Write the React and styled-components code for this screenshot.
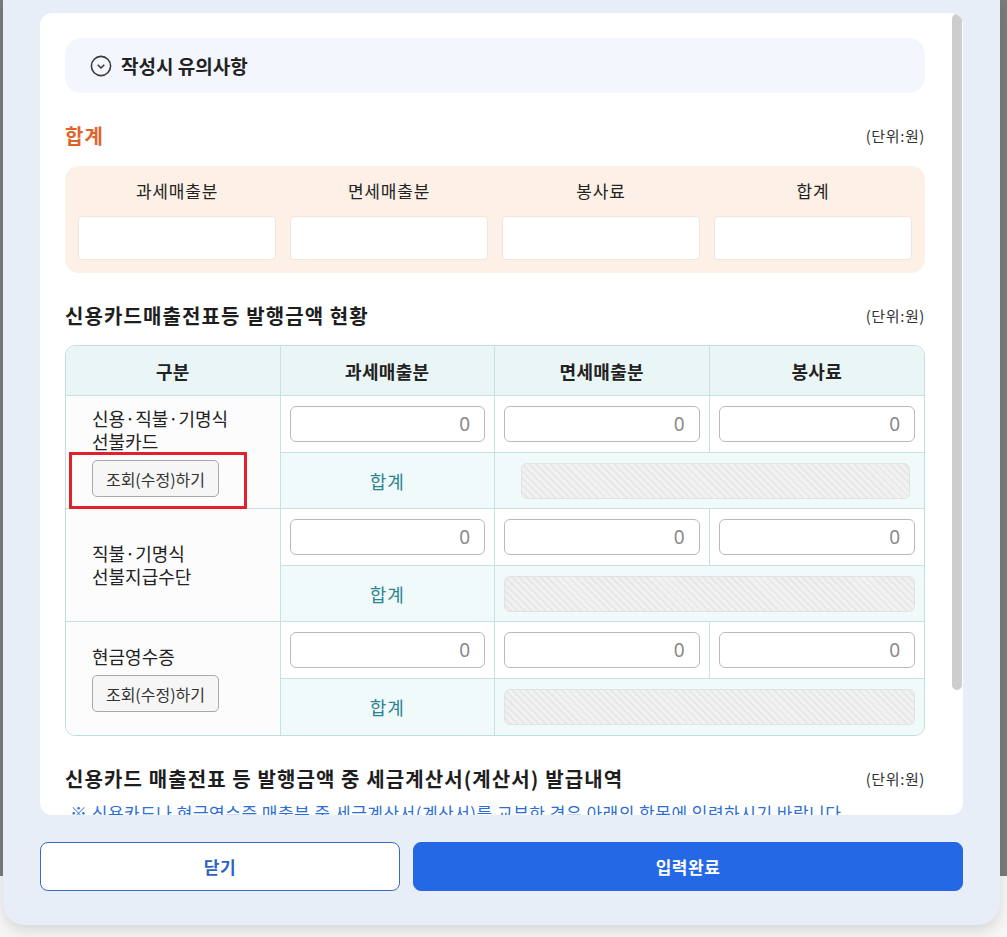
import React from "react";
import styled, { createGlobalStyle } from "styled-components";

const GlobalStyle = createGlobalStyle`
  html, body {
    margin: 0;
    padding: 0;
  }
  body {
    font-family: "Noto Sans CJK KR", "Noto Sans", sans-serif;
    color: #222;
  }
  * {
    box-sizing: border-box;
  }
`;

const Page = styled.div`
  width: 1007px;
  height: 937px;
  overflow: hidden;
  background: linear-gradient(
    to bottom,
    #7b7b7b 0,
    #7b7b7b 876px,
    #f6f6f6 876px
  );
`;

const Modal = styled.div`
  margin-left: 3px;
  width: 997px;
  height: 925px;
  background: #e8eef8;
  border-radius: 0 0 22px 22px;
  box-shadow: 0 6px 14px rgba(0, 0, 0, 0.12);
  padding: 13px 37px 0;
  display: flex;
  flex-direction: column;
`;

const Panel = styled.div`
  height: 802px;
  background: #fff;
  border-radius: 12px;
  overflow: hidden;
  display: flex;
`;

const Content = styled.div`
  flex: 1;
  min-width: 0;
  overflow: hidden;
  padding: 25px 26px 0 25px;
`;

const ScrollTrack = styled.div`
  width: 12px;
  padding: 1px 1px 0 1px;
`;

const ScrollThumb = styled.div`
  height: 676px;
  background: #cdcdcd;
  border-radius: 5px;
`;

const Notice = styled.div`
  height: 55px;
  background: #f3f7fd;
  border-radius: 16px;
  display: flex;
  align-items: center;
  gap: 9px;
  padding-left: 25px;
  font-size: 19px;
  font-weight: 700;
  color: #222;
`;

const SectionHead = styled.div`
  display: flex;
  align-items: center;
  justify-content: space-between;
  height: 30px;
  margin-top: 27px;
  margin-bottom: ${(props) => props.$gap}px;
`;

const SectionTitle = styled.h2`
  margin: 0;
  font-size: 20px;
  font-weight: 700;
  color: ${(props) => (props.$accent ? "#e0632b" : "#1e1e1e")};
  letter-spacing: ${(props) => (props.$accent ? 1 : 1.1)}px;
  white-space: nowrap;
`;

const Unit = styled.span`
  font-size: 15px;
  letter-spacing: 0.6px;
  color: #333;
`;

const SumBox = styled.div`
  background: #fdf1e7;
  border-radius: 14px;
  padding: 13px;
  display: grid;
  grid-template-columns: repeat(4, 1fr);
  column-gap: 14px;
`;

const SumCol = styled.div`
  display: flex;
  flex-direction: column;
  gap: 13px;
`;

const SumLabel = styled.div`
  height: 24px;
  line-height: 24px;
  text-align: center;
  font-size: 17px;
  letter-spacing: 0.8px;
  color: #222;
`;

const SumInput = styled.input`
  height: 44px;
  width: 100%;
  border: 1px solid #f1e5db;
  border-radius: 4px;
  background: #fff;
  outline: none;
`;

const Table = styled.div`
  display: grid;
  grid-template-columns: repeat(4, 1fr);
  grid-template-rows: 50px repeat(3, 57px 56px);
  border: 1px solid #bfdfe0;
  border-radius: 10px;
  overflow: hidden;
`;

const Head = styled.div`
  background: #eaf6f6;
  display: flex;
  align-items: center;
  justify-content: center;
  font-size: 18px;
  letter-spacing: 0.3px;
  font-weight: 700;
  color: #222;
  border-bottom: 1px solid #c6e2e3;
  border-right: ${(props) => (props.$last ? "none" : "1px solid #c6e2e3")};
`;

const KindCell = styled.div`
  grid-row: span 2;
  position: relative;
  background: #fcfcfc;
  border-right: 1px solid #c6e2e3;
  border-bottom: ${(props) => (props.$last ? "none" : "1px solid #c6e2e3")};
  display: flex;
  flex-direction: column;
  justify-content: center;
  align-items: flex-start;
  padding-left: 26px;
  gap: 7px;
`;

const KindName = styled.div`
  font-size: 18px;
  line-height: 23px;
  color: #222;
`;

const LookupButton = styled.button`
  width: 127px;
  height: 37px;
  border: 1px solid #a9a9a9;
  border-radius: 5px;
  background: #f6f6f6;
  font-family: inherit;
  font-size: 16px;
  color: #333;
  padding: 0;
  cursor: pointer;
`;

const Highlight = styled.div`
  position: absolute;
  left: 3px;
  top: 56px;
  width: 178px;
  height: 57px;
  border: 3px solid #e0202a;
  pointer-events: none;
`;

const InputCell = styled.div`
  background: #fff;
  padding: 10px 9px 0;
  border-bottom: 1px solid #c6e2e3;
  border-right: ${(props) => (props.$last ? "none" : "1px solid #c6e2e3")};
`;

const AmountInput = styled.input`
  width: 100%;
  height: 36px;
  border: 1px solid #bababa;
  border-radius: 6px;
  background: #fff;
  text-align: right;
  padding: 0 14px 0 8px;
  font-family: "Noto Sans", "Liberation Sans", sans-serif;
  font-size: 19px;
  color: #8a8a8a;
  outline: none;
`;

const TotalLabel = styled.div`
  background: #f1fafa;
  display: flex;
  align-items: center;
  justify-content: center;
  font-size: 18px;
  letter-spacing: 1px;
  color: #2b8590;
  border-right: 1px solid #c6e2e3;
  border-bottom: ${(props) => (props.$last ? "none" : "1px solid #c6e2e3")};
`;

const TotalCell = styled.div`
  grid-column: span 2;
  background: #f1fafa;
  padding: 10px ${(props) => props.$right}px 0 ${(props) => props.$left}px;
  border-bottom: ${(props) => (props.$last ? "none" : "1px solid #c6e2e3")};
`;

const Hatched = styled.div`
  height: 36px;
  border: 1px solid #e2e2e2;
  border-radius: 6px;
  background: repeating-linear-gradient(
    45deg,
    #f1f1f1 0,
    #f1f1f1 3px,
    #e7e7e7 3px,
    #e7e7e7 5px
  );
`;

const Note = styled.p`
  margin: 9px 0 0 5px;
  font-size: 17px;
  letter-spacing: 0.5px;
  line-height: 22px;
  color: #2d6fd8;
  white-space: nowrap;
`;

const Footer = styled.div`
  display: grid;
  grid-template-columns: 360px 1fr;
  gap: 13px;
  margin-top: 27px;
`;

const FooterButton = styled.button`
  height: 49px;
  border-radius: 8px;
  font-family: inherit;
  font-size: 17px;
  letter-spacing: 0.5px;
  font-weight: 700;
  cursor: pointer;
  border: 1px solid ${(props) => (props.$primary ? "#2568e5" : "#3a6ac4")};
  background: ${(props) => (props.$primary ? "#2568e5" : "#fff")};
  color: ${(props) => (props.$primary ? "#fff" : "#2d62c0")};
`;

const ChevronCircle = () => (
  <svg width="22" height="22" viewBox="0 0 22 22" fill="none">
    <circle cx="11" cy="11" r="9.6" stroke="#3a3a3a" strokeWidth="1.6" />
    <path
      d="M8.2 10.2 L11 13 L13.8 10.2"
      stroke="#3a3a3a"
      strokeWidth="1.6"
      strokeLinecap="round"
      strokeLinejoin="round"
    />
  </svg>
);

const rows = [
  {
    name: ["신용·직불·기명식", "선불카드"],
    button: true,
    highlight: true,
    left: 26,
    right: 14,
  },
  { name: ["직불·기명식", "선불지급수단"], button: false, left: 9, right: 9 },
  { name: ["현금영수증"], button: true, left: 9, right: 9 },
];

const App = () => {
  return (
    <Page>
      <GlobalStyle />
      <Modal>
        <Panel>
          <Content>
            <Notice>
              <ChevronCircle />
              작성시 유의사항
            </Notice>

            <SectionHead $gap={16}>
              <SectionTitle $accent>합계</SectionTitle>
              <Unit>(단위:원)</Unit>
            </SectionHead>
            <SumBox>
              {["과세매출분", "면세매출분", "봉사료", "합계"].map((label) => (
                <SumCol key={label}>
                  <SumLabel>{label}</SumLabel>
                  <SumInput readOnly />
                </SumCol>
              ))}
            </SumBox>

            <SectionHead $gap={15}>
              <SectionTitle>신용카드매출전표등 발행금액 현황</SectionTitle>
              <Unit>(단위:원)</Unit>
            </SectionHead>
            <Table>
              <Head>구분</Head>
              <Head>과세매출분</Head>
              <Head>면세매출분</Head>
              <Head $last>봉사료</Head>
              {rows.map((row, i) => {
                const last = i === rows.length - 1;
                return (
                  <React.Fragment key={i}>
                    <KindCell $last={last}>
                      <KindName>
                        {row.name.map((line) => (
                          <div key={line}>{line}</div>
                        ))}
                      </KindName>
                      {row.button && (
                        <LookupButton>조회(수정)하기</LookupButton>
                      )}
                      {row.highlight && <Highlight />}
                    </KindCell>
                    <InputCell>
                      <AmountInput defaultValue="0" />
                    </InputCell>
                    <InputCell>
                      <AmountInput defaultValue="0" />
                    </InputCell>
                    <InputCell $last>
                      <AmountInput defaultValue="0" />
                    </InputCell>
                    <TotalLabel $last={last}>합계</TotalLabel>
                    <TotalCell
                      $last={last}
                      $left={row.left}
                      $right={row.right}
                    >
                      <Hatched />
                    </TotalCell>
                  </React.Fragment>
                );
              })}
            </Table>

            <SectionHead $gap={0}>
              <SectionTitle>
                신용카드 매출전표 등 발행금액 중 세금계산서(계산서) 발급내역
              </SectionTitle>
              <Unit>(단위:원)</Unit>
            </SectionHead>
            <Note>
              ※ 신용카드나 현금영수증 매출분 중 세금계산서(계산서)를 교부한
              경우 아래의 항목에 입력하시기 바랍니다.
            </Note>
          </Content>
          <ScrollTrack>
            <ScrollThumb />
          </ScrollTrack>
        </Panel>
        <Footer>
          <FooterButton>닫기</FooterButton>
          <FooterButton $primary>입력완료</FooterButton>
        </Footer>
      </Modal>
    </Page>
  );
};

export default App;
